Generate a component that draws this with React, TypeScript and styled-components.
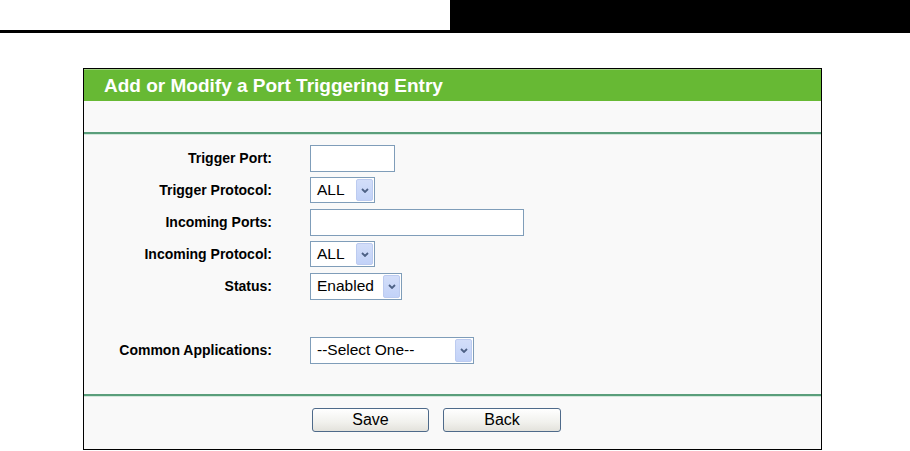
import styled, { createGlobalStyle } from "styled-components";

const GlobalStyle = createGlobalStyle`
  body {
    margin: 0;
    background: #fff;
    font-family: "Liberation Sans", Arial, sans-serif;
  }
`;

const TopBar = styled.div`
  display: flex;
  height: 33px;
`;

const TopRule = styled.div`
  width: 450px;
  box-sizing: border-box;
  border-bottom: 3px solid #000;
`;

const TopBlock = styled.div`
  flex: 1;
  background: #000;
`;

const Frame = styled.div`
  margin: 35px 0 0 83px;
  width: 739px;
  height: 382px;
  box-sizing: border-box;
  border: 1px solid #000;
  background: #f9f9f9;
  display: flex;
  flex-direction: column;
`;

const Header = styled.div`
  height: 32px;
  box-sizing: border-box;
  padding: 1px 0 0 20px;
  background: #67b934;
  border-top: 1px solid #9fd17e;
  color: #fff;
  font-weight: bold;
  font-size: 19px;
  display: flex;
  align-items: center;
`;

const Spacer = styled.div`
  height: 31px;
`;

const GreenRule = styled.div`
  height: 2px;
  background: #5a9e7b;
  border-bottom: 1px solid #d3e8dc;
`;

const Form = styled.div`
  display: grid;
  grid-template-columns: 188px 1fr;
  column-gap: 38px;
  grid-auto-rows: 32px;
  padding: 7px 0 28px;
`;

const Label = styled.div`
  font-size: 14px;
  font-weight: bold;
  color: #000;
  text-align: right;
  align-self: center;
`;

const Field = styled.div`
  display: flex;
  align-items: center;
`;

const Gap = styled.div`
  grid-column: 1 / 3;
  height: 31px;
`;

const TextInput = styled.div<{ $w: number }>`
  width: ${(p) => p.$w}px;
  height: 27px;
  box-sizing: border-box;
  border: 1px solid #7f9db9;
  background: #fff;
`;

const SelectBox = styled.div<{ $w: number; $h?: number }>`
  width: ${(p) => p.$w}px;
  height: ${(p) => p.$h ?? 26}px;
  box-sizing: border-box;
  border: 1px solid #7f9db9;
  background: #fff;
  display: flex;
  align-items: stretch;
  padding: 1px;
`;

const SelectValue = styled.span`
  flex: 1;
  display: flex;
  align-items: center;
  padding-left: 5px;
  font-size: 15.5px;
  color: #000;
  white-space: nowrap;
  overflow: hidden;
`;

const ArrowBox = styled.span`
  width: 17px;
  box-sizing: border-box;
  background: linear-gradient(#d3def9, #c2d2f8);
  border: 1px solid #bccbf0;
  border-radius: 2px;
  display: flex;
  align-items: center;
  justify-content: center;
`;

const ButtonBar = styled.div`
  display: flex;
  gap: 14px;
  padding: 11px 0 0 228px;
`;

const Button = styled.button<{ $w: number }>`
  width: ${(p) => p.$w}px;
  height: 24px;
  box-sizing: border-box;
  border: 1px solid #4e6a8a;
  border-radius: 3px;
  background: linear-gradient(#ffffff, #f1f1ed 60%, #e3e2dc);
  font-family: "Liberation Sans", Arial, sans-serif;
  font-size: 16px;
  color: #000;
  padding: 0;
`;

const Chevron = () => (
  <svg width="8" height="5" viewBox="0 0 8 5">
    <path d="M1 1 L4 4 L7 1" fill="none" stroke="#4d6185" strokeWidth="1.8" />
  </svg>
);

const Select = ({ value, w, h }: { value: string; w: number; h?: number }) => (
  <SelectBox $w={w} $h={h}>
    <SelectValue>{value}</SelectValue>
    <ArrowBox>
      <Chevron />
    </ArrowBox>
  </SelectBox>
);

export default function App() {
  return (
    <>
      <GlobalStyle />
      <TopBar>
        <TopRule />
        <TopBlock />
      </TopBar>
      <Frame>
        <Header>Add or Modify a Port Triggering Entry</Header>
        <Spacer />
        <GreenRule />
        <Form>
          <Label>Trigger Port:</Label>
          <Field>
            <TextInput $w={85} />
          </Field>
          <Label>Trigger Protocol:</Label>
          <Field>
            <Select value="ALL" w={65} />
          </Field>
          <Label>Incoming Ports:</Label>
          <Field>
            <TextInput $w={214} />
          </Field>
          <Label>Incoming Protocol:</Label>
          <Field>
            <Select value="ALL" w={65} />
          </Field>
          <Label>Status:</Label>
          <Field>
            <Select value="Enabled" w={92} h={27} />
          </Field>
          <Gap />
          <Label>Common Applications:</Label>
          <Field>
            <Select value="--Select One--" w={164} h={27} />
          </Field>
        </Form>
        <GreenRule />
        <ButtonBar>
          <Button $w={117}>Save</Button>
          <Button $w={118}>Back</Button>
        </ButtonBar>
      </Frame>
    </>
  );
}
